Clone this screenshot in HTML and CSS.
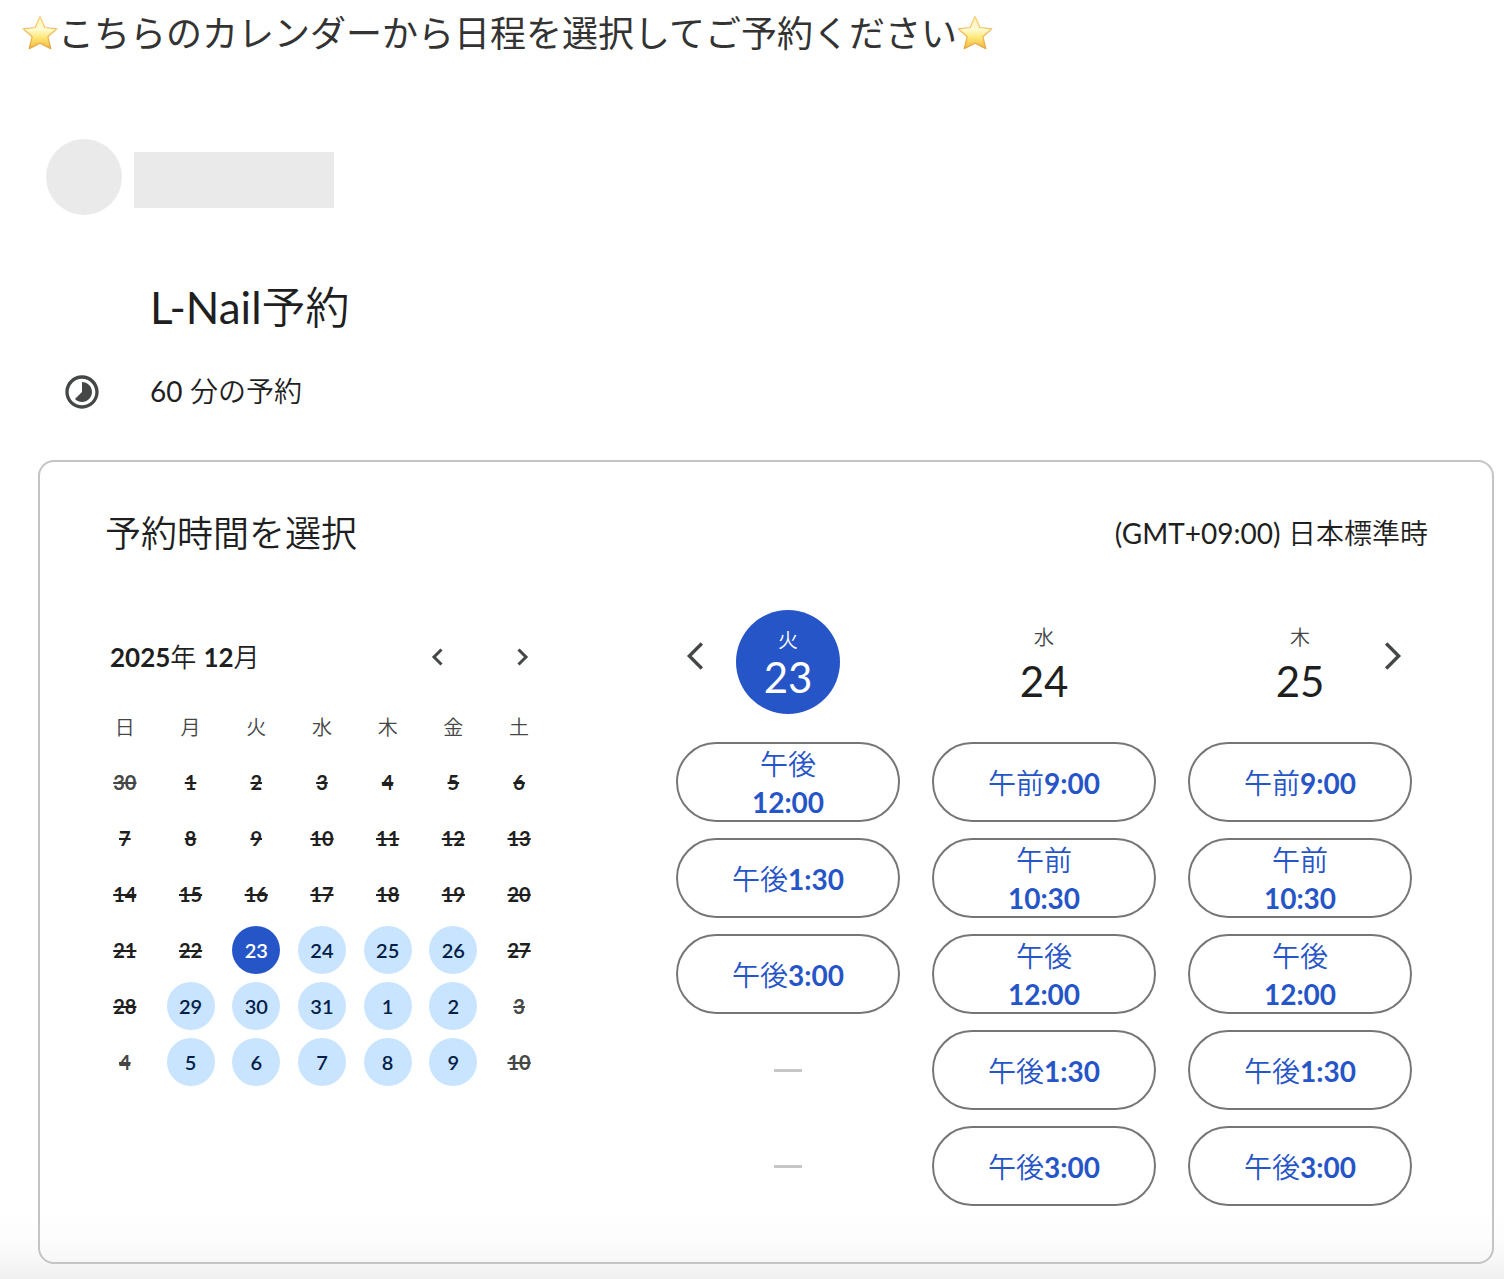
FILE: index.html
```html
<!DOCTYPE html>
<html lang="ja">
<head>
    <meta charset="UTF-8">
    <meta name="viewport" content="width=device-width, initial-scale=1.0">
    <title>L-Nail予約</title>
    <link rel="stylesheet" href="styles.css">
</head>
<body>

    <svg class="defs" aria-hidden="true">
        <defs>
            <linearGradient id="starFill" x1="0" y1="0" x2="0" y2="1">
                <stop offset="0" stop-color="#fff3b0"/>
                <stop offset="0.4" stop-color="#fffbd2"/>
                <stop offset="0.65" stop-color="#fde878"/>
                <stop offset="1" stop-color="#f3b53c"/>
            </linearGradient>
            <linearGradient id="starEdge" x1="0" y1="0" x2="0" y2="1">
                <stop offset="0" stop-color="#f8cf78"/>
                <stop offset="1" stop-color="#e5a440"/>
            </linearGradient>
            <symbol id="star" viewBox="0 0 36 36">
                <path d="M18 1.5l4.9 11 11.9 1.3-8.9 8 2.9 11.8L18 28.2 7.2 33.6l2.9-11.8-8.9-8 11.9-1.3z" fill="url(#starFill)" stroke="url(#starEdge)" stroke-width="1.2" stroke-linejoin="round"/>
            </symbol>
            <symbol id="chevron-left" viewBox="0 0 24 24">
                <path d="M15.5 4.5L8 12l7.5 7.5" fill="none" stroke="currentColor"/>
            </symbol>
            <symbol id="chevron-right" viewBox="0 0 24 24">
                <path d="M8.5 4.5L16 12l-7.5 7.5" fill="none" stroke="currentColor"/>
            </symbol>
        </defs>
    </svg>

    <h1 class="notice">
        <svg class="star"><use href="#star"/></svg>
        <span>こちらのカレンダーから日程を選択してご予約ください</span>
        <svg class="star"><use href="#star"/></svg>
    </h1>

    <div class="profile">
        <div class="avatar"></div>
        <div class="profile-name"></div>
    </div>

    <div class="summary">
        <h2><span class="latin">L-Nail</span>予約</h2>
        <svg class="duration-icon" viewBox="0 0 24 24" aria-hidden="true">
            <path fill="currentColor" d="M16.24 7.76C15.07 6.59 13.54 6 12 6v6l-4.24 4.24c2.34 2.34 6.14 2.34 8.49 0 2.34-2.34 2.34-6.14-.01-8.48zM12 2C6.48 2 2 6.48 2 12s4.48 10 10 10 10-4.48 10-10S17.52 2 12 2zm0 18c-4.42 0-8-3.58-8-8s3.58-8 8-8 8 3.58 8 8-3.58 8-8 8z"/>
        </svg>
        <p><span class="latin">60</span> 分の予約</p>
    </div>

    <main class="booking">
        <div class="booking-header">
            <h2>予約時間を選択</h2>
            <div class="timezone"><span class="latin">(GMT+09:00)</span> 日本標準時</div>
        </div>

        <div class="booking-body">
            <section class="calendar">
                <div class="month-bar">
                    <h3><b>2025</b>年 <b>12</b>月</h3>
                    <button type="button" class="month-btn" aria-label="前の月"><svg><use href="#chevron-left"/></svg></button>
                    <button type="button" class="month-btn" aria-label="次の月"><svg><use href="#chevron-right"/></svg></button>
                </div>
                <table>
                    <thead>
                        <tr><th>日</th><th>月</th><th>火</th><th>水</th><th>木</th><th>金</th><th>土</th></tr>
                    </thead>
                    <tbody>
                        <tr>
                            <td><button class="other" disabled>30</button></td>
                            <td><button disabled>1</button></td>
                            <td><button disabled>2</button></td>
                            <td><button disabled>3</button></td>
                            <td><button disabled>4</button></td>
                            <td><button disabled>5</button></td>
                            <td><button disabled>6</button></td>
                        </tr>
                        <tr>
                            <td><button disabled>7</button></td>
                            <td><button disabled>8</button></td>
                            <td><button disabled>9</button></td>
                            <td><button disabled>10</button></td>
                            <td><button disabled>11</button></td>
                            <td><button disabled>12</button></td>
                            <td><button disabled>13</button></td>
                        </tr>
                        <tr>
                            <td><button disabled>14</button></td>
                            <td><button disabled>15</button></td>
                            <td><button disabled>16</button></td>
                            <td><button disabled>17</button></td>
                            <td><button disabled>18</button></td>
                            <td><button disabled>19</button></td>
                            <td><button disabled>20</button></td>
                        </tr>
                        <tr>
                            <td><button disabled>21</button></td>
                            <td><button disabled>22</button></td>
                            <td><button class="selected">23</button></td>
                            <td><button>24</button></td>
                            <td><button>25</button></td>
                            <td><button>26</button></td>
                            <td><button disabled>27</button></td>
                        </tr>
                        <tr>
                            <td><button disabled>28</button></td>
                            <td><button>29</button></td>
                            <td><button>30</button></td>
                            <td><button>31</button></td>
                            <td><button>1</button></td>
                            <td><button>2</button></td>
                            <td><button class="other" disabled>3</button></td>
                        </tr>
                        <tr>
                            <td><button class="other" disabled>4</button></td>
                            <td><button>5</button></td>
                            <td><button>6</button></td>
                            <td><button>7</button></td>
                            <td><button>8</button></td>
                            <td><button>9</button></td>
                            <td><button class="other" disabled>10</button></td>
                        </tr>
                    </tbody>
                </table>
            </section>

            <section class="schedule">
                <div class="day-nav">
                    <button type="button" class="day-btn" aria-label="前へ"><svg><use href="#chevron-left"/></svg></button>
                    <button type="button" class="day-btn" aria-label="次へ"><svg><use href="#chevron-right"/></svg></button>
                </div>
                <div class="days">
                    <div class="day">
                        <div class="day-head current"><span>火</span><strong>23</strong></div>
                        <button class="slot"><span>午後</span><b>12:00</b></button>
                        <button class="slot"><span>午後</span><b>1:30</b></button>
                        <button class="slot"><span>午後</span><b>3:00</b></button>
                        <div class="no-slot"></div>
                        <div class="no-slot"></div>
                    </div>
                    <div class="day">
                        <div class="day-head"><span>水</span><strong>24</strong></div>
                        <button class="slot"><span>午前</span><b>9:00</b></button>
                        <button class="slot"><span>午前</span><b>10:30</b></button>
                        <button class="slot"><span>午後</span><b>12:00</b></button>
                        <button class="slot"><span>午後</span><b>1:30</b></button>
                        <button class="slot"><span>午後</span><b>3:00</b></button>
                    </div>
                    <div class="day">
                        <div class="day-head"><span>木</span><strong>25</strong></div>
                        <button class="slot"><span>午前</span><b>9:00</b></button>
                        <button class="slot"><span>午前</span><b>10:30</b></button>
                        <button class="slot"><span>午後</span><b>12:00</b></button>
                        <button class="slot"><span>午後</span><b>1:30</b></button>
                        <button class="slot"><span>午後</span><b>3:00</b></button>
                    </div>
                </div>
            </section>
        </div>
    </main>

</body>
</html>
```
FILE: styles.css
```css
* {
    box-sizing: border-box;
}

body {
    font-family: Lato, "Noto Sans CJK JP", sans-serif;
    font-weight: 350;
    margin: 0;
    min-height: 100vh;
    color: #1f1f1f;
    background: linear-gradient(to top, #f0f0f0, #f8f8f8 20px, #fdfdfd 44px, #fff 72px) no-repeat #fff;
}

h1, h2, h3, p {
    margin: 0;
    font-weight: inherit;
}

b {
    font-weight: 700;
}

button {
    font: inherit;
    color: inherit;
    padding: 0;
    border: none;
    background: none;
    cursor: pointer;
}

.latin {
    font-weight: 400;
}

.defs {
    position: absolute;
    width: 0;
    height: 0;
}

/* top message */
.notice {
    display: flex;
    align-items: center;
    padding: 9px 22px 11px;
    font-size: 36px;
    font-weight: 400;
    line-height: 48px;
    color: #333;
}

.star {
    width: 36px;
    height: 36px;
    flex: none;
}

/* owner */
.profile {
    display: flex;
    align-items: center;
    gap: 12px;
    padding: 71px 46px 0;
}

.avatar {
    width: 76px;
    height: 76px;
    border-radius: 50%;
    background: #eaeaea;
}

.profile-name {
    width: 200px;
    height: 56px;
    margin-top: 5px;
    background: #eaeaea;
}

.summary {
    display: grid;
    grid-template-columns: 88px 1fr;
    row-gap: 37px;
    align-items: center;
    padding: 64px 62px 48px;
}

.summary h2 {
    grid-column: 2;
    font-size: 44px;
    line-height: 56px;
}

.summary p {
    font-size: 28px;
    line-height: 38px;
    padding-bottom: 2px;
}

.duration-icon {
    width: 40px;
    height: 40px;
    color: #444746;
}

/* booking card */
.booking {
    margin: 0 10px 15px 38px;
    padding: 43px 64px 56px 52px;
    border: 2px solid #c4c4c4;
    border-radius: 16px;
}

.booking-header {
    display: flex;
    justify-content: space-between;
    align-items: center;
    padding-left: 13px;
    line-height: 56px;
}

.booking-header h2 {
    font-size: 36px;
}

.timezone {
    font-size: 28px;
}

.booking-body {
    display: grid;
    grid-template-columns: 460fr 736fr;
    column-gap: 124px;
    padding: 49px 16px 0 0;
}

.month-bar {
    display: flex;
    align-items: center;
    gap: 36px;
    padding: 23px 6px 17px 18px;
}

.month-bar h3 {
    flex: 1;
    font-size: 26px;
    line-height: 48px;
}

.month-btn {
    width: 48px;
    height: 48px;
    color: #444746;
}

.month-btn svg {
    display: block;
    width: 24px;
    height: 24px;
    margin: auto;
    stroke-width: 3px;
}

.calendar table {
    width: 100%;
    table-layout: fixed;
    border-collapse: collapse;
    font-size: 20px;
    text-align: center;
}

.calendar th,
.calendar td {
    height: 56px;
    padding: 0;
}

.calendar th {
    font-weight: inherit;
    color: #444746;
}

.calendar td button {
    width: 48px;
    height: 48px;
    border-radius: 50%;
    font-weight: 600;
    color: #041e49;
    background: #c8e4fe;
}

.calendar td button:disabled {
    color: #1f1f1f;
    background: none;
    font-weight: 700;
    text-decoration: line-through;
    cursor: default;
}

.calendar td button.other {
    color: #444746;
}

.calendar td button.selected {
    color: #fff;
    background: #2655c7;
}

/* day columns, arrows share the row of the day heads */
.schedule {
    display: grid;
}

.day-nav,
.days {
    grid-area: 1 / 1;
}

.day-nav {
    display: flex;
    justify-content: space-between;
    align-self: start;
    padding-top: 26px;
}

.day-btn {
    width: 40px;
    height: 40px;
    color: #444746;
}

.day-btn svg {
    display: block;
    width: 40px;
    height: 40px;
    stroke-width: 2px;
}

.days {
    display: grid;
    grid-template-columns: repeat(3, 1fr);
    gap: 32px;
}

.day {
    display: flex;
    flex-direction: column;
    gap: 16px;
}

.day-head {
    display: flex;
    flex-direction: column;
    align-items: center;
    align-self: center;
    width: 104px;
    height: 104px;
    margin-bottom: 12px;
    padding-top: 11px;
    border-radius: 50%;
}

.day-head span {
    font-size: 20px;
    line-height: 32px;
    color: #444746;
}

.day-head strong {
    font-size: 42px;
    font-weight: 400;
    line-height: 56px;
}

.day-head.current {
    padding-top: 14px;
    color: #fff;
    background: #2655c7;
}

.day-head.current span {
    color: #fff;
}

.day-head.current strong {
    line-height: 42px;
}

.slot {
    height: 80px;
    padding: 1px 50px 0;
    border: 2px solid #747775;
    border-radius: 40px;
    font-size: 28px;
    line-height: 38px;
    color: #2655c7;
}

.slot span,
.slot b {
    display: inline-block;
}

.no-slot {
    display: flex;
    align-items: center;
    justify-content: center;
    height: 80px;
}

.no-slot::before {
    content: "";
    width: 28px;
    height: 3px;
    background: #c4c7c5;
}
```
